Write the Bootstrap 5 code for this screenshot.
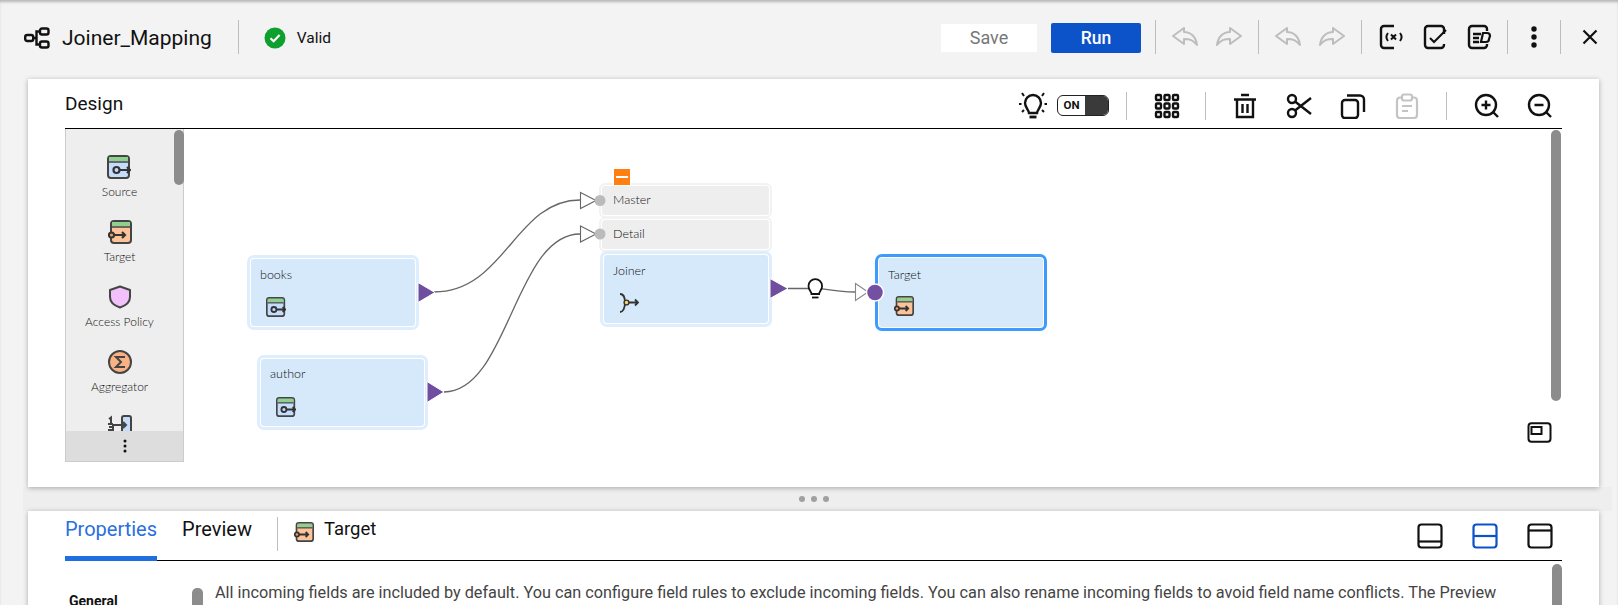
<!DOCTYPE html>
<html lang="en">
<head>
  <meta charset="UTF-8">
  <meta name="viewport" content="width=device-width, initial-scale=1.0">
  <title>Joiner_Mapping</title>
  <link href="https://cdn.jsdelivr.net/npm/bootstrap@5.3.0/dist/css/bootstrap.min.css" rel="stylesheet">
  <style>
    html, body { height: 100%; overflow: hidden; }
    body { background: #f3f3f3; font-family: Roboto, "Liberation Sans", sans-serif; color: #111; }
    .app-shell { height: 605px; overflow: hidden; box-shadow: inset 0 3px 3px -1px #b5b5b5; }

    /* top bar */
    .top-bar { height: 79px; padding: 0 0 3px 24px; }
    .map-icon { width: 26px; height: 22px; }
    .map-title { font-size: 21px; margin-left: 12px; padding-right: 26px; line-height: 28px; }
    .v-sep { width: 1px; background: #bdbdbd; flex: none; align-self: center; height: 28px; }
    .top-bar .v-sep { height: 34px; margin-top: -2px; }
    .valid-icon { width: 22px; height: 22px; margin-left: 25px; margin-top: -1px; }
    .valid-text { font-size: 15.5px; margin-left: 11px; margin-top: 1px; }
    .btn.save-btn { width: 96px; height: 28px; padding: 0; border: 0; border-radius: 0; background: #fff; color: #777; font-size: 18px; line-height: 28px; }
    .btn.run-btn { width: 90px; height: 30px; padding: 0; border: 0; border-radius: 2px; background: #0c52c9; color: #fff; font-size: 17.5px; font-weight: 500; line-height: 30px; margin: 0 14px; }
    .btn.ico-btn { width: 26px; height: 26px; padding: 0; border: 0; border-radius: 0; line-height: 0; flex: none; }
    .ico-btn svg { width: 26px; height: 26px; }
    .tool-group { gap: 18px; padding: 0 16px; margin-top: -2px; }
    .tool-group.g-third { padding: 0 15px 0 16px; }
    .dots-slot { width: 52px; margin-top: -2px; }
    .close-slot { width: 57px; margin-top: -2px; }

    /* panels */
    .panel-box { margin: 0 19px 0 28px; background: #fff; border: 0; border-radius: 0; box-shadow: 0 1px 5px rgba(0,0,0,.3); }
    .design-box { height: 408px; }
    .panel-head { height: 50px; margin: 0 37px; padding-top: 4px; border-bottom: 1.5px solid #000; }
    .design-label { font-size: 19px; margin-top: -3px; }
    .bulb-big { width: 28px; height: 28px; }
    .mode-toggle { width: 52px; height: 21px; margin-left: 10px; border: 1px solid #222; border-radius: 6px; overflow: hidden; font-size: 11.5px; font-weight: 700; line-height: 19px; }
    .mode-toggle span { width: 27px; text-align: center; }
    .mode-toggle i { background: #3a3a3a; }
    .hint-group { padding-right: 17px; }
    .grid-slot { padding: 0 25px 0 27px; }
    .edit-group { gap: 28px; padding: 0 26px 0 26px; }
    .zoom-group { gap: 27px; padding: 0 9px 0 27px; }
    .design-body { margin: 0 37px; }

    .palette-box { width: 119px; height: 333px; background: #eee; border: 1px solid #ccc; border-top: 0; flex: none; }
    .palette-list { height: 302px; overflow: hidden; padding: 26px 10px 0 0; gap: 20px; }
    .palette-item svg { width: 24px; height: 24px; flex: none; }
    .palette-item span { font-family: Lato, "Open Sans", sans-serif; font-size: 12px; font-weight: 300; line-height: 16px; margin-top: 5px; color: #111; white-space: nowrap; }
    .palette-more { height: 30px; background: #ddd; }
    .palette-more svg { width: 4px; height: 14px; }
    .palette-thumb { top: 1px; left: 108px; width: 10px; height: 55px; }
    .scroll-thumb { position: absolute; background: #8c8c8c; border-radius: 5px; }

    /* canvas, nodes sit at their own spots on it */
    .map-canvas { height: 333px; }
    .map-wires { position: absolute; left: 0; top: 0; width: 1378px; height: 333px; pointer-events: none; z-index: 2; }
    .map-node { position: absolute; background: #d6e9fb; border-radius: 3px; font-family: Lato, "Open Sans", sans-serif; font-size: 12.5px; font-weight: 300; color: #111; outline: 3px solid #dfeefd; outline-offset: 1px; }
    .map-node svg { position: absolute; width: 20px; height: 20px; }
    .map-node span { position: absolute; line-height: 16px; }
    .node-books { left: 67px; top: 130px; width: 164px; height: 67px; }
    .node-author { left: 77px; top: 230px; width: 163px; height: 67px; }
    .node-joiner { left: 420px; top: 126px; width: 164px; height: 68px; }
    .node-target { left: 695px; top: 129px; width: 164px; height: 69px; outline-color: #3d9bfb; }
    .map-node span { left: 9px; top: 8px; }
    .node-author span { top: 7px; }
    .node-target span { top: 9px; }
    .map-node svg { left: 15px; top: 38px; }
    .node-joiner svg { top: 38px; }
    .port-row { position: absolute; left: 418px; width: 167px; height: 29px; background: #eee; border-radius: 3px; font-family: Lato, "Open Sans", sans-serif; font-size: 12.5px; font-weight: 300; line-height: 27px; padding-left: 11px; color: #111; outline: 2px solid #f2f2f2; outline-offset: 1px; }
    .port-master { top: 57px; }
    .port-detail { top: 91px; }
    .collapse-tag { position: absolute; left: 430px; top: 40px; width: 16px; height: 16px; background: #ff7f11; z-index: 3; outline: 1px solid #fff; display: flex; align-items: center; justify-content: center; }
    .collapse-tag i { width: 12px; height: 2px; background: #fff; }
    .canvas-thumb { left: 1367px; top: 1px; width: 10px; height: 271px; }
    .fit-view { position: absolute; left: 1343px; top: 293px; width: 25px; height: 21px; }

    /* gutter */
    .split-gutter { height: 24px; margin: 0 6px 0 23px; padding-right: 7px; background: #eee; gap: 6px; }
    .split-gutter i { width: 6px; height: 6px; border-radius: 50%; background: #a0a0a0; }

    /* properties */
    .props-box { height: 110px; overflow: hidden; }
    .props-head { height: 50px; margin: 0 37px; border-bottom: 1.5px solid #000; }
    .tab-link { font-size: 20px; line-height: 24px; padding: 6px 0 0; height: 50px; color: #111; position: relative; }
    .tab-link.tab-active { color: #2a6fdc; margin-right: 25px; border-bottom: 5px solid #1f6fe0; }
    .tab-sep { height: 34px; margin: 6px 16px 0 25px; width: 1px; background: #bdbdbd; }
    .tab-icon { width: 20px; height: 20px; margin: 11px 10px 0 0; }
    .tab-link.tab-name { font-size: 18.5px; }
    .layout-group { gap: 29px; padding: 0 9px 0 0; }
    .layout-group svg { width: 26px; height: 26px; }
    .props-body { margin: 0 37px; position: relative; height: 60px; }
    .props-nav { width: 127px; padding: 32px 0 0 4px; font-size: 14px; font-weight: 700; line-height: 16px; flex: none; }
    .nav-thumb { position: relative; width: 11px; height: 40px; margin-top: 27px; background: #8c8c8c; border-radius: 5px; flex: none; }
    .props-text { margin: 22px 0 0 12px; font-size: 16.25px; line-height: 20px; color: #444; white-space: nowrap; }
    .props-thumb { right: 0; top: 3px; width: 10px; height: 60px; }
  </style>
</head>
<body>
  <!-- shared icons -->
  <svg class="d-none" xmlns="http://www.w3.org/2000/svg">
    <symbol id="i-source" viewBox="0 0 24 24">
      <rect x="1" y="1" width="21" height="22" rx="3" fill="#c6dcfb" stroke="#444" stroke-width="2"/>
      <rect x="2" y="2" width="19" height="4" fill="#8ed08e"/>
      <path d="M2 7h19" stroke="#444" stroke-width="1.5"/>
      <circle cx="9.5" cy="15" r="3" fill="none" stroke="#333" stroke-width="2.2"/>
      <path d="M13 15h10M20 12l3 3-3 3" fill="none" stroke="#333" stroke-width="2.2"/>
    </symbol>
    <symbol id="i-target" viewBox="0 0 24 24">
      <rect x="3" y="1" width="20" height="22" rx="3" fill="#fcc29a" stroke="#444" stroke-width="2"/>
      <rect x="4" y="2" width="18" height="4" fill="#8ed08e"/>
      <path d="M4 7h18" stroke="#444" stroke-width="1.5"/>
      <circle cx="3.5" cy="15" r="2.6" fill="#f49a5a" stroke="#333" stroke-width="2"/>
      <path d="M6 15h11M14 12l3 3-3 3" fill="none" stroke="#333" stroke-width="2.2"/>
    </symbol>
    <symbol id="i-undo" viewBox="0 0 26 26">
      <path d="M12 4 1 12l11 8v-5c6 0 9 1 13 6-1-8-6-13-13-13z" fill="none" stroke="#bdbdbd" stroke-width="2" stroke-linejoin="round"/>
    </symbol>
    <symbol id="i-redo" viewBox="0 0 26 26">
      <path d="M14 4l11 8-11 8v-5c-6 0-9 1-13 6 1-8 6-13 13-13z" fill="none" stroke="#bdbdbd" stroke-width="2" stroke-linejoin="round"/>
    </symbol>
  </svg>

  <div class="app-shell d-flex flex-column">
    <header class="top-bar d-flex align-items-center flex-shrink-0">
      <svg class="map-icon" viewBox="0 0 26 22" fill="none" stroke="#111" stroke-width="2.4">
        <rect x="1.2" y="8" width="8" height="6" rx="2"/>
        <rect x="16" y="1.5" width="8.5" height="6" rx="2"/>
        <rect x="16" y="14.5" width="8.5" height="6" rx="2"/>
        <path d="M9 11h3.5V4.5H16M12.5 11v6.5H16"/>
      </svg>
      <div class="map-title">Joiner_Mapping</div>
      <div class="v-sep"></div>
      <svg class="valid-icon" viewBox="0 0 22 22">
        <circle cx="11" cy="11" r="10.5" fill="#0ea02f"/>
        <path d="M6.5 11.3l3.1 3 6-6.2" fill="none" stroke="#fff" stroke-width="2.2"/>
      </svg>
      <div class="valid-text">Valid</div>

      <div class="ms-auto d-flex align-items-center">
        <button type="button" class="btn save-btn">Save</button>
        <button type="button" class="btn run-btn">Run</button>
        <div class="v-sep"></div>
        <div class="d-flex tool-group">
          <button type="button" class="btn ico-btn"><svg><use href="#i-undo"/></svg></button>
          <button type="button" class="btn ico-btn"><svg><use href="#i-redo"/></svg></button>
        </div>
        <div class="v-sep"></div>
        <div class="d-flex tool-group">
          <button type="button" class="btn ico-btn"><svg><use href="#i-undo"/></svg></button>
          <button type="button" class="btn ico-btn"><svg><use href="#i-redo"/></svg></button>
        </div>
        <div class="v-sep"></div>
        <div class="d-flex tool-group g-third">
          <button type="button" class="btn ico-btn">
            <svg viewBox="0 0 26 26" fill="none" stroke="#111" stroke-width="2.4">
              <path d="M16 2H6a3 3 0 0 0-3 3v16a3 3 0 0 0 3 3h10"/>
              <path d="M10 9c-2 2.500-2 5.500 0 8M22 9c2 2.500 2 5.500 0 8M13 10.500l5 5M18 10.500l-5 5" stroke-width="2"/>
            </svg>
          </button>
          <button type="button" class="btn ico-btn">
            <svg viewBox="0 0 26 26" fill="none" stroke="#111" stroke-width="2.4">
              <path d="M22 10V5a3 3 0 0 0-3-3H6a3 3 0 0 0-3 3v16a3 3 0 0 0 3 3h13a3 3 0 0 0 3-3v-1"/>
              <path d="M8 14l4 4 12-12" stroke-width="2"/>
            </svg>
          </button>
          <button type="button" class="btn ico-btn">
            <svg viewBox="0 0 26 26" fill="none" stroke="#111" stroke-width="2.4">
              <path d="M21 7V5a3 3 0 0 0-3-3H6a3 3 0 0 0-3 3v16a3 3 0 0 0 3 3h12a3 3 0 0 0 3-3v-1"/>
              <path d="M7 10h8M7 14h6M7 18h6"/>
              <path d="M17 9h4a3 3 0 0 1 3 3l-1 3a3 3 0 0 1-3 3h-5z" stroke-width="2.2"/>
            </svg>
          </button>
        </div>
        <div class="v-sep"></div>
        <div class="dots-slot d-flex justify-content-center">
          <svg width="6" height="22" viewBox="0 0 6 22" fill="#111"><circle cx="3" cy="3" r="2.700"/><circle cx="3" cy="11" r="2.700"/><circle cx="3" cy="19" r="2.700"/></svg>
        </div>
        <div class="v-sep"></div>
        <div class="close-slot d-flex justify-content-center">
          <svg width="16" height="16" viewBox="0 0 16 16" stroke="#111" stroke-width="2.200"><path d="M1.500 1.500l13 13M14.500 1.500l-13 13"/></svg>
        </div>
      </div>
    </header>

    <section class="card panel-box design-box flex-shrink-0">
      <div class="panel-head d-flex align-items-center">
        <div class="design-label">Design</div>
        <div class="ms-auto d-flex align-items-center">
          <div class="d-flex align-items-center hint-group">
            <svg class="bulb-big" viewBox="0 0 28 28" fill="none" stroke="#111" stroke-width="2.4">
              <path d="M10 21c0-3-4-5.500-4-10a8 8 0 0 1 16 0c0 4.500-4 7-4 10z"/>
              <path d="M10.500 25h7" stroke-width="2.800"/>
              <path d="M3 1l2 3M25 1l-2 3M0 12h2.500M25.500 12H28M3 20l2-2M25 20l-2-2" stroke-width="2"/>
            </svg>
            <div class="mode-toggle d-flex"><span>ON</span><i class="flex-grow-1"></i></div>
          </div>
          <div class="v-sep"></div>
          <div class="grid-slot">
            <button type="button" class="btn ico-btn">
              <svg viewBox="0 0 26 26" fill="none" stroke="#111" stroke-width="2.400">
                <rect x="2" y="2" width="5" height="5" rx="1"/><rect x="10.500" y="2" width="5" height="5" rx="1"/><rect x="19" y="2" width="5" height="5" rx="1"/>
                <rect x="2" y="10.500" width="5" height="5" rx="1"/><rect x="10.500" y="10.500" width="5" height="5" rx="1"/><rect x="19" y="10.500" width="5" height="5" rx="1"/>
                <rect x="2" y="19" width="5" height="5" rx="1"/><rect x="10.500" y="19" width="5" height="5" rx="1"/><rect x="19" y="19" width="5" height="5" rx="1"/>
              </svg>
            </button>
          </div>
          <div class="v-sep"></div>
          <div class="d-flex edit-group">
            <button type="button" class="btn ico-btn">
              <svg viewBox="0 0 26 26" fill="none" stroke="#111" stroke-width="2.400">
                <path d="M2 6.500h22M9 2h8M5 7v17h16V7M10.500 11v9M15.500 11v9"/>
              </svg>
            </button>
            <button type="button" class="btn ico-btn">
              <svg viewBox="0 0 26 26" fill="none" stroke="#111" stroke-width="2.400">
                <circle cx="6" cy="6" r="4"/><circle cx="6" cy="20" r="4"/>
                <path d="M9 8.500 25 21M9 17.500 25 5"/>
              </svg>
            </button>
            <button type="button" class="btn ico-btn">
              <svg viewBox="0 0 26 26" fill="none" stroke="#111" stroke-width="2.400">
                <rect x="2" y="7" width="16" height="18" rx="3"/>
                <path d="M7 2.500h13a4 4 0 0 1 4 4V19"/>
              </svg>
            </button>
            <button type="button" class="btn ico-btn">
              <svg viewBox="0 0 26 26" fill="none" stroke="#c4c4c4" stroke-width="2.200">
                <path d="M8 4.500H6a3 3 0 0 0-3 3V22a3 3 0 0 0 3 3h14a3 3 0 0 0 3-3V7.500a3 3 0 0 0-3-3h-2"/>
                <rect x="8" y="1.500" width="10" height="6" rx="2"/>
                <path d="M8 13h10M8 18h6"/>
              </svg>
            </button>
          </div>
          <div class="v-sep"></div>
          <div class="d-flex zoom-group">
            <button type="button" class="btn ico-btn">
              <svg viewBox="0 0 26 26" fill="none" stroke="#111" stroke-width="2.400">
                <circle cx="12" cy="12" r="10"/><path d="M19 19l5 5M12 7.500v9M7.500 12h9"/>
              </svg>
            </button>
            <button type="button" class="btn ico-btn">
              <svg viewBox="0 0 26 26" fill="none" stroke="#111" stroke-width="2.400">
                <circle cx="12" cy="12" r="10"/><path d="M19 19l5 5M7.500 12h9"/>
              </svg>
            </button>
          </div>
        </div>
      </div>

      <div class="d-flex design-body">
        <aside class="palette-box position-relative d-flex flex-column">
          <div class="palette-list d-flex flex-column align-items-center">
            <div class="palette-item d-flex flex-column align-items-center">
              <svg><use href="#i-source"/></svg><span>Source</span>
            </div>
            <div class="palette-item d-flex flex-column align-items-center">
              <svg><use href="#i-target"/></svg><span>Target</span>
            </div>
            <div class="palette-item d-flex flex-column align-items-center">
              <svg viewBox="0 0 24 24"><path d="M12 1.500 22 5v7c0 5-4 8.500-10 10.500C6 20.500 2 17 2 12V5z" fill="#f2c1fb" stroke="#444" stroke-width="2" stroke-linejoin="round"/></svg>
              <span>Access Policy</span>
            </div>
            <div class="palette-item d-flex flex-column align-items-center">
              <svg viewBox="0 0 24 24"><circle cx="12" cy="12" r="11" fill="#fab184" stroke="#444" stroke-width="2"/><path d="M17 7H8l5 5-5 5h9" fill="none" stroke="#444" stroke-width="2"/></svg>
              <span>Aggregator</span>
            </div>
            <div class="palette-item d-flex flex-column align-items-center">
              <svg viewBox="0 0 24 24" fill="none" stroke="#444" stroke-width="2">
                <rect x="14" y="1" width="9" height="22" rx="2" fill="#c6dcfb"/>
                <path d="M1 4l2-1.500V9M0 9h5M1 12h4v3H1v3h4M4 10h14M15 7l3 3-3 3"/>
              </svg>
            </div>
          </div>
          <div class="palette-more d-flex align-items-center justify-content-center">
            <svg viewBox="0 0 4 14" fill="#111"><circle cx="2" cy="2" r="1.500"/><circle cx="2" cy="7" r="1.500"/><circle cx="2" cy="12" r="1.500"/></svg>
          </div>
          <div class="scroll-thumb palette-thumb"></div>
        </aside>

        <div class="map-canvas position-relative flex-grow-1">
          <div class="collapse-tag"><i></i></div>
          <div class="port-row port-master">Master</div>
          <div class="port-row port-detail">Detail</div>
          <div class="map-node node-books"><span>books</span><svg><use href="#i-source"/></svg></div>
          <div class="map-node node-author"><span>author</span><svg><use href="#i-source"/></svg></div>
          <div class="map-node node-joiner">
            <span>Joiner</span>
            <svg viewBox="0 0 20 20" fill="none" stroke="#333" stroke-width="1.800">
              <path d="M1 1c3 0 5 3 5 8.500M1 19c3 0 5-4 5-9.500M9 9.500h10M16 6.500l3 3-3 3"/>
              <circle cx="7.500" cy="9.500" r="2.400" fill="#ffd667" stroke-width="1.400"/>
            </svg>
          </div>
          <div class="map-node node-target"><span>Target</span><svg><use href="#i-target"/></svg></div>

          <svg class="map-wires" viewBox="184 129 1378 333">
            <g fill="none" stroke="#666" stroke-width="1.300">
              <path d="M434 292C505 292 515 200 580 200"/>
              <path d="M444 392C508 392 515 234 580 234"/>
              <path d="M788 288.500H820C835 291 840 292 856 292"/>
            </g>
            <g fill="#6f4d9f" stroke="#fff" stroke-width="1">
              <path d="M418 282.500 435 292.500 418 302.500z"/>
              <path d="M427 381.500 444 392 427 402.500z"/>
              <path d="M770 278.500 788 288.500 770 298.500z"/>
            </g>
            <g fill="#fff" stroke="#666" stroke-width="1.100">
              <path d="M580.500 192.500 596 200.500 580.500 208.500z"/>
              <path d="M580.500 226 596 234 580.500 242z"/>
              <path d="M855.500 283.500 868 292 855.500 300.500z" stroke="#888"/>
            </g>
            <circle cx="600" cy="200.500" r="5.500" fill="#bbb"/>
            <circle cx="600" cy="234" r="5.500" fill="#bbb"/>
            <circle cx="875" cy="292.500" r="8.500" fill="#7450a3" stroke="#fff" stroke-width="1.500"/>
            <g fill="#fff" stroke="#111" stroke-width="1.800">
              <path d="M811.500 294c0-2.500-3-4-3-8a6.800 6.800 0 0 1 13.600 0c0 4-3 5.500-3 8z"/>
              <path d="M812 297.500h6.500" stroke-width="1.800"/>
            </g>
          </svg>

          <div class="scroll-thumb canvas-thumb"></div>
          <svg class="fit-view" viewBox="0 0 25 21" fill="none" stroke="#111" stroke-width="2">
            <rect x="1.500" y="1.200" width="22" height="18.600" rx="3"/>
            <rect x="4.500" y="5" width="10" height="7"/>
          </svg>
        </div>
      </div>
    </section>

    <div class="split-gutter d-flex align-items-center justify-content-center flex-shrink-0">
      <i></i><i></i><i></i>
    </div>

    <section class="card panel-box props-box flex-shrink-0">
      <div class="props-head d-flex">
        <div class="tab-link tab-active">Properties</div>
        <div class="tab-link">Preview</div>
        <div class="tab-sep"></div>
        <svg class="tab-icon"><use href="#i-target"/></svg>
        <div class="tab-link tab-name">Target</div>
        <div class="ms-auto d-flex align-items-center layout-group">
          <svg viewBox="0 0 26 26" fill="none" stroke="#111" stroke-width="2.200"><rect x="1.500" y="1.500" width="23" height="23" rx="3"/><path d="M1.500 18.500h23"/></svg>
          <svg viewBox="0 0 26 26" fill="none" stroke="#0c52c9" stroke-width="2.200"><rect x="1.500" y="1.500" width="23" height="23" rx="3"/><path d="M1.500 13h23"/></svg>
          <svg viewBox="0 0 26 26" fill="none" stroke="#111" stroke-width="2.200"><rect x="1.500" y="1.500" width="23" height="23" rx="3"/><path d="M1.500 7.500h23"/></svg>
        </div>
      </div>
      <div class="props-body d-flex">
        <div class="props-nav">General</div>
        <div class="nav-thumb"></div>
        <div class="props-text">All incoming fields are included by default. You can configure field rules to exclude incoming fields. You can also rename incoming fields to avoid field name conflicts. The Preview</div>
        <div class="scroll-thumb props-thumb"></div>
      </div>
    </section>
  </div>
  <script src="https://cdn.jsdelivr.net/npm/bootstrap@5.3.0/dist/js/bootstrap.bundle.min.js"></script>
</body>
</html>
